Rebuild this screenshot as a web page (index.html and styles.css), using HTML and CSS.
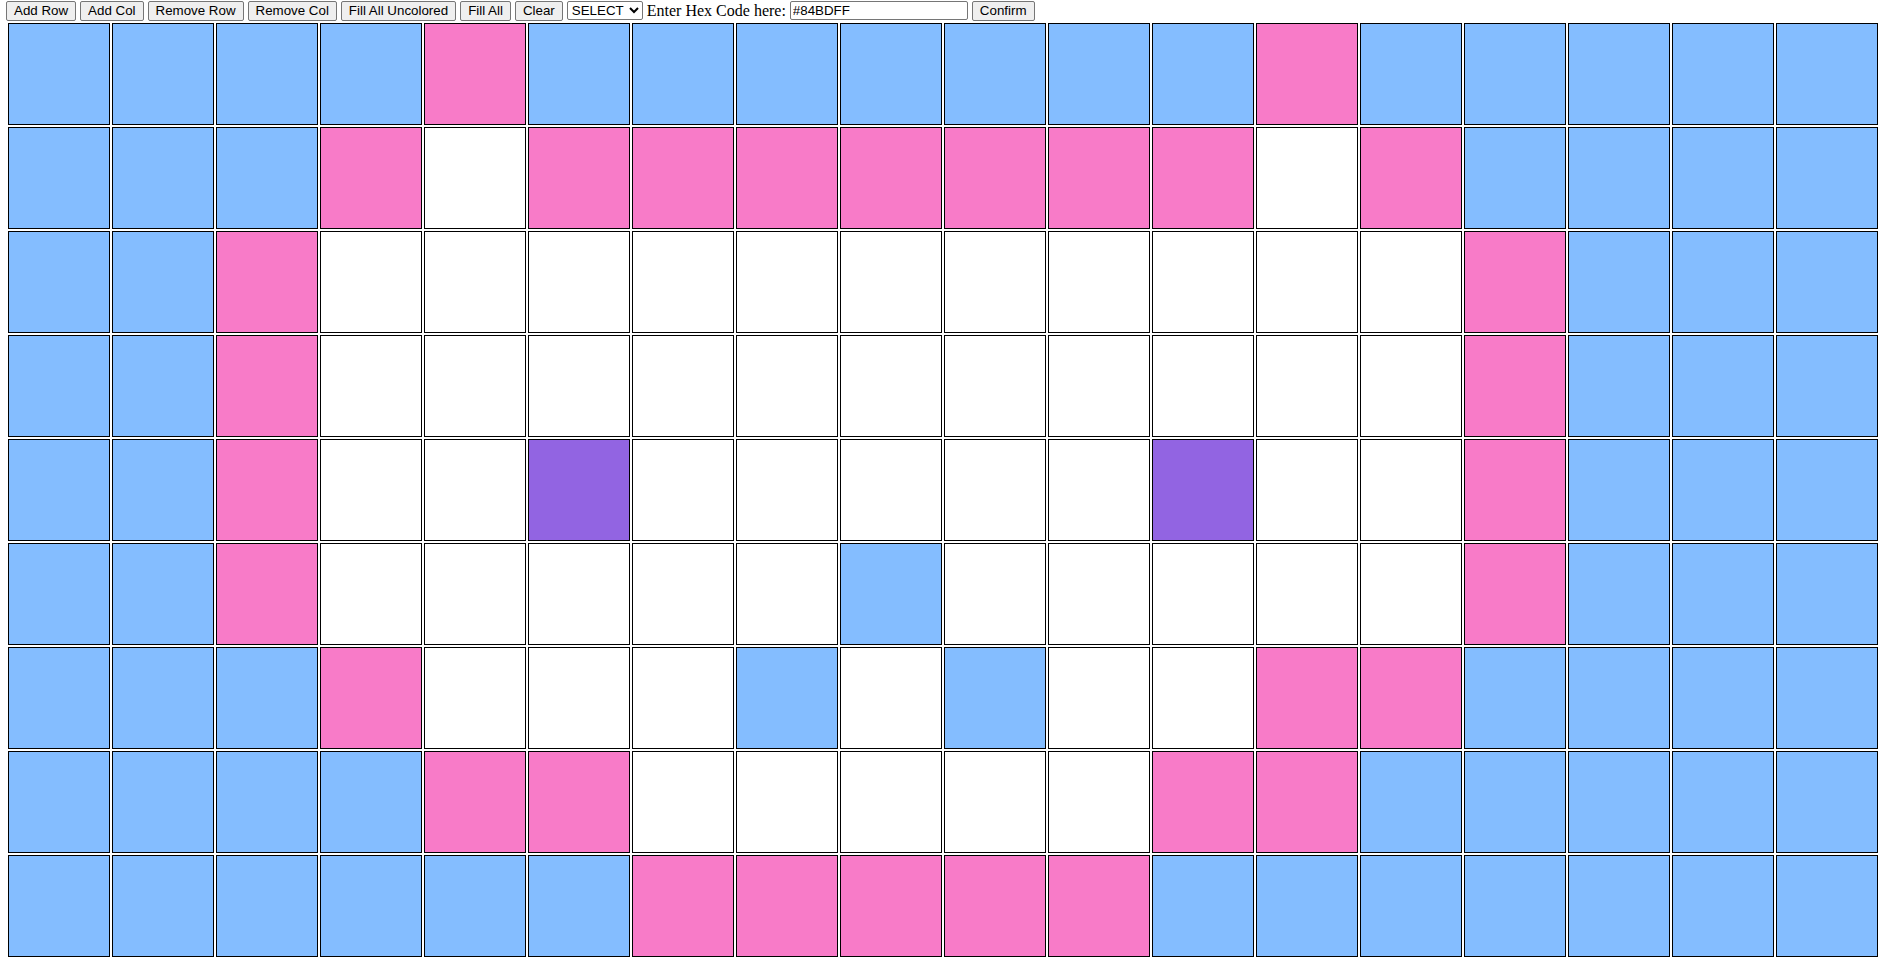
FILE: index.html
```html
<!DOCTYPE html>
<html>
<head>
<meta charset="utf-8">
<title>Pixel Grid</title>
<link rel="stylesheet" href="styles.css">
</head>
<body>
<div class="toolbar">
  <button class="btn">Add Row</button>
  <button class="btn">Add Col</button>
  <button class="btn">Remove Row</button>
  <button class="btn">Remove Col</button>
  <button class="btn">Fill All Uncolored</button>
  <button class="btn">Fill All</button>
  <button class="btn">Clear</button>
  <select class="sel"><option>SELECT</option></select>
  <span class="label">Enter Hex Code here:</span>
  <input class="hex" type="text" value="#84BDFF">
  <button class="btn">Confirm</button>
</div>
<div class="grid">
  <div class="c b"></div><div class="c b"></div><div class="c b"></div><div class="c b"></div><div class="c p"></div><div class="c b"></div><div class="c b"></div><div class="c b"></div><div class="c b"></div><div class="c b"></div><div class="c b"></div><div class="c b"></div><div class="c p"></div><div class="c b"></div><div class="c b"></div><div class="c b"></div><div class="c b"></div><div class="c b"></div>
  <div class="c b"></div><div class="c b"></div><div class="c b"></div><div class="c p"></div><div class="c w"></div><div class="c p"></div><div class="c p"></div><div class="c p"></div><div class="c p"></div><div class="c p"></div><div class="c p"></div><div class="c p"></div><div class="c w"></div><div class="c p"></div><div class="c b"></div><div class="c b"></div><div class="c b"></div><div class="c b"></div>
  <div class="c b"></div><div class="c b"></div><div class="c p"></div><div class="c w"></div><div class="c w"></div><div class="c w"></div><div class="c w"></div><div class="c w"></div><div class="c w"></div><div class="c w"></div><div class="c w"></div><div class="c w"></div><div class="c w"></div><div class="c w"></div><div class="c p"></div><div class="c b"></div><div class="c b"></div><div class="c b"></div>
  <div class="c b"></div><div class="c b"></div><div class="c p"></div><div class="c w"></div><div class="c w"></div><div class="c w"></div><div class="c w"></div><div class="c w"></div><div class="c w"></div><div class="c w"></div><div class="c w"></div><div class="c w"></div><div class="c w"></div><div class="c w"></div><div class="c p"></div><div class="c b"></div><div class="c b"></div><div class="c b"></div>
  <div class="c b"></div><div class="c b"></div><div class="c p"></div><div class="c w"></div><div class="c w"></div><div class="c u"></div><div class="c w"></div><div class="c w"></div><div class="c w"></div><div class="c w"></div><div class="c w"></div><div class="c u"></div><div class="c w"></div><div class="c w"></div><div class="c p"></div><div class="c b"></div><div class="c b"></div><div class="c b"></div>
  <div class="c b"></div><div class="c b"></div><div class="c p"></div><div class="c w"></div><div class="c w"></div><div class="c w"></div><div class="c w"></div><div class="c w"></div><div class="c b"></div><div class="c w"></div><div class="c w"></div><div class="c w"></div><div class="c w"></div><div class="c w"></div><div class="c p"></div><div class="c b"></div><div class="c b"></div><div class="c b"></div>
  <div class="c b"></div><div class="c b"></div><div class="c b"></div><div class="c p"></div><div class="c w"></div><div class="c w"></div><div class="c w"></div><div class="c b"></div><div class="c w"></div><div class="c b"></div><div class="c w"></div><div class="c w"></div><div class="c p"></div><div class="c p"></div><div class="c b"></div><div class="c b"></div><div class="c b"></div><div class="c b"></div>
  <div class="c b"></div><div class="c b"></div><div class="c b"></div><div class="c b"></div><div class="c p"></div><div class="c p"></div><div class="c w"></div><div class="c w"></div><div class="c w"></div><div class="c w"></div><div class="c w"></div><div class="c p"></div><div class="c p"></div><div class="c b"></div><div class="c b"></div><div class="c b"></div><div class="c b"></div><div class="c b"></div>
  <div class="c b"></div><div class="c b"></div><div class="c b"></div><div class="c b"></div><div class="c b"></div><div class="c b"></div><div class="c p"></div><div class="c p"></div><div class="c p"></div><div class="c p"></div><div class="c p"></div><div class="c b"></div><div class="c b"></div><div class="c b"></div><div class="c b"></div><div class="c b"></div><div class="c b"></div><div class="c b"></div>
</div>
</body>
</html>
```
FILE: styles.css
```css
html, body {
  margin: 0;
  padding: 0;
  background: #ffffff;
}
body {
  font-family: "Liberation Serif", "Times New Roman", serif;
  font-size: 16px;
  color: #000;
}
.toolbar {
  display: flex;
  align-items: center;
  gap: 4px;
  padding: 0 0 0 6px;
  height: 21px;
}
.btn {
  font-family: "Liberation Sans", Arial, sans-serif;
  font-size: 13.33px;
  height: 20px;
  padding: 1px 7px;
  border: 1px solid #767676;
  border-radius: 2px;
  background: #efefef;
  color: #000;
}
.sel {
  font-family: "Liberation Sans", Arial, sans-serif;
  font-size: 13.33px;
  width: 76px;
  height: 19px;
  border: 1px solid #767676;
  border-radius: 2px;
  background: #fff;
  color: #000;
}
.label {
  white-space: nowrap;
}
.hex {
  font-family: "Liberation Sans", Arial, sans-serif;
  font-size: 13.33px;
  width: 178px;
  height: 19px;
  box-sizing: border-box;
  padding: 1px 2px;
  border: 1px solid #767676;
  border-radius: 2px;
}
.grid {
  display: grid;
  grid-template-columns: repeat(18, 102px);
  grid-auto-rows: 102px;
  gap: 2px;
  margin: 2px 0 0 8px;
}
.c {
  box-sizing: border-box;
  border: 1px solid #000;
}
.b { background: #84bdff; }
.p { background: #f87bc8; }
.w { background: #ffffff; }
.u { background: #9264e2; }
```
